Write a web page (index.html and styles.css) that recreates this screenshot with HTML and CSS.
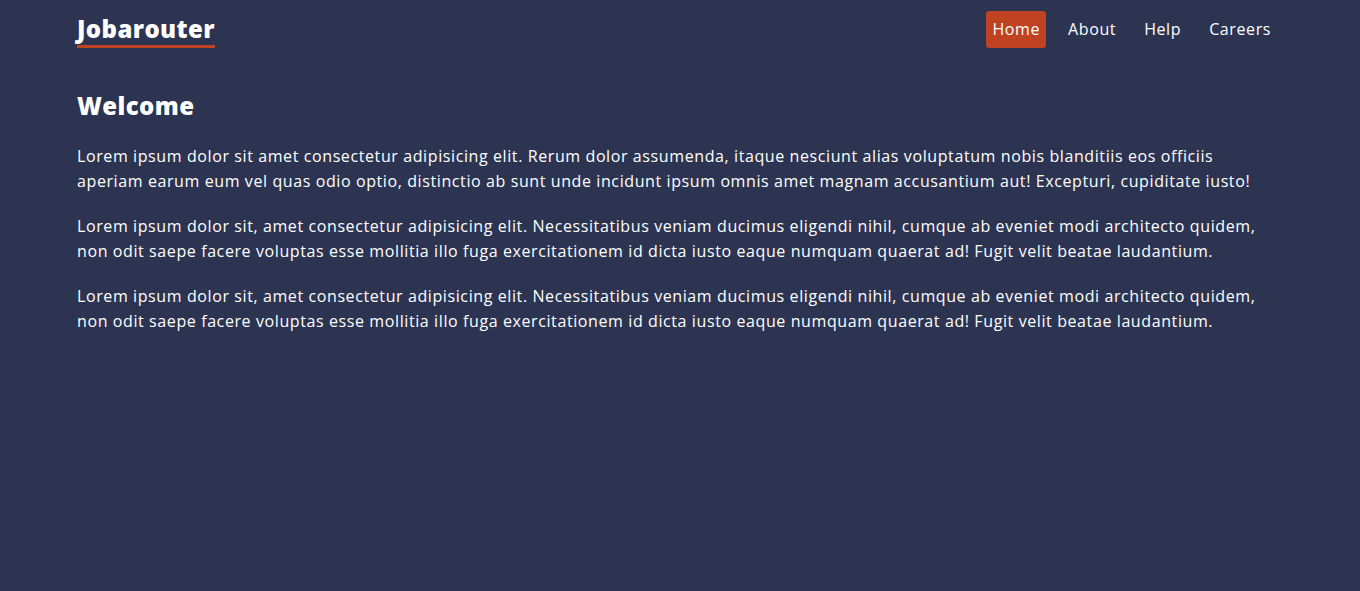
FILE: index.html
```html
<!DOCTYPE html>
<html lang="en">
<head>
<meta charset="utf-8">
<title>Jobarouter</title>
<link rel="stylesheet" href="styles.css">
</head>
<body>
<div class="container">
  <header class="header">
    <a class="logo" href="#">Jobarouter</a>
    <nav class="nav">
      <a class="nav-link active" href="#">Home</a>
      <a class="nav-link" href="#">About</a>
      <a class="nav-link" href="#">Help</a>
      <a class="nav-link" href="#">Careers</a>
    </nav>
  </header>
  <main class="main">
    <h1 class="title">Welcome</h1>
    <p class="text">Lorem ipsum dolor sit amet consectetur adipisicing elit. Rerum dolor assumenda, itaque nesciunt alias voluptatum nobis blanditiis eos officiis aperiam earum eum vel quas odio optio, distinctio ab sunt unde incidunt ipsum omnis amet magnam accusantium aut! Excepturi, cupiditate iusto!</p>
    <p class="text">Lorem ipsum dolor sit, amet consectetur adipisicing elit. Necessitatibus veniam ducimus eligendi nihil, cumque ab eveniet modi architecto quidem, non odit saepe facere voluptas esse mollitia illo fuga exercitationem id dicta iusto eaque numquam quaerat ad! Fugit velit beatae laudantium.</p>
    <p class="text">Lorem ipsum dolor sit, amet consectetur adipisicing elit. Necessitatibus veniam ducimus eligendi nihil, cumque ab eveniet modi architecto quidem, non odit saepe facere voluptas esse mollitia illo fuga exercitationem id dicta iusto eaque numquam quaerat ad! Fugit velit beatae laudantium.</p>
  </main>
</div>
</body>
</html>
```

FILE: styles.css
```css
* { box-sizing: border-box; }
html, body {
  margin: 0;
  padding: 0;
  background: #2c3452;
  color: #ffffff;
  font-family: "Open Sans", "Liberation Sans", sans-serif;
}
.container {
  max-width: 1206px;
  margin: 0 auto;
  padding-right: 6px;
}
.header {
  display: flex;
  justify-content: space-between;
  align-items: flex-start;
  padding-top: 11px;
}
.logo {
  color: #fff;
  text-decoration: none;
  font-weight: 800;
  font-size: 24px;
  line-height: 30px;
  letter-spacing: 0.4px;
  padding-top: 3px;
  padding-bottom: 1px;
  border-bottom: 3px solid #c04322;
}
.nav {
  display: flex;
  gap: 16px;
}
.nav-link {
  color: #fff;
  text-decoration: none;
  font-size: 16px;
  line-height: 25px;
  letter-spacing: 0.6px;
  padding: 6px;
  border-radius: 3px;
}
.nav-link.active {
  background: #bf4322;
}
.main {
  padding-top: 41px;
}
.title {
  margin: 0 0 21px;
  font-size: 24px;
  line-height: 34px;
  font-weight: 800;
  letter-spacing: 0.4px;
}
.text {
  margin: 0 0 20px;
  font-size: 16px;
  line-height: 25px;
  letter-spacing: 0.6px;
}
```
